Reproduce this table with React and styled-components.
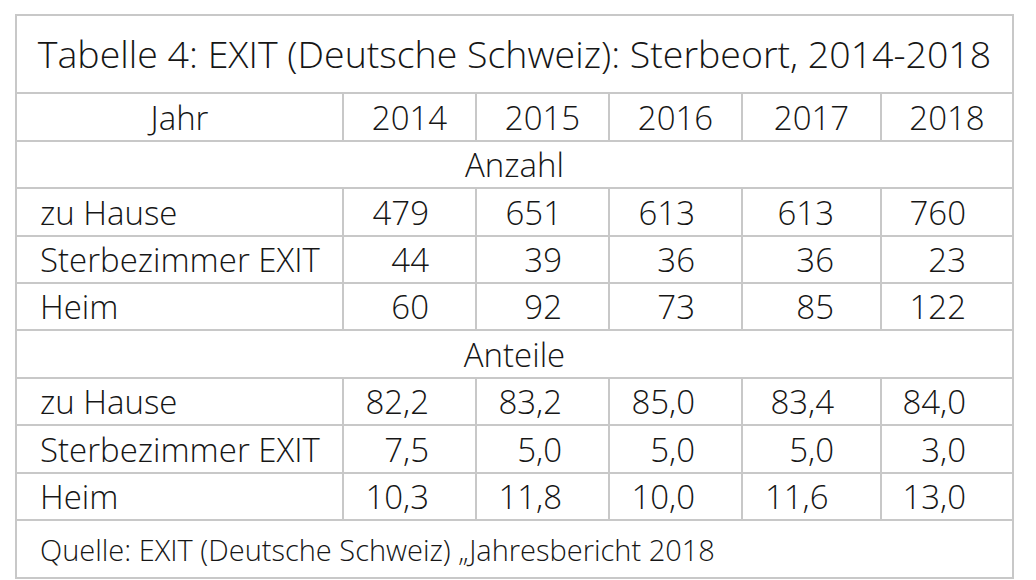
import React from 'react';
import styled, { createGlobalStyle } from 'styled-components';

const GlobalStyle = createGlobalStyle`
  html, body {
    margin: 0;
    padding: 0;
    background: #ffffff;
  }
  body {
    font-family: "Open Sans", "Liberation Sans", sans-serif;
    font-weight: 300;
    color: #161616;
  }
`;

const Page = styled.div`
  padding: 14px 0 0 15px;
`;

const Grid = styled.div`
  display: inline-grid;
  grid-template-columns: 325px 131px 131px 131px 137px 130px;
  grid-template-rows: 76px 46px 45px 46px 45px 45px 46px 45px 46px 45px 56px;
  gap: 2px;
  padding: 2px;
  background: #c8c8c8;
`;

const Cell = styled.div`
  background: #ffffff;
  display: flex;
  align-items: center;
  font-size: 33px;
  line-height: 1;
  white-space: pre;
  justify-content: ${(p) =>
    p.$align === 'right' ? 'flex-end' : p.$align === 'left' ? 'flex-start' : 'center'};
  padding: ${(p) =>
    p.$align === 'right' ? '0 46px 0 0' : p.$align === 'left' ? '0 0 0 23px' : '0'};
`;

const Title = styled(Cell)`
  grid-column: 1 / -1;
  font-size: 37.5px;
`;

const Section = styled(Cell)`
  grid-column: 1 / -1;
`;

const Source = styled(Cell)`
  grid-column: 1 / -1;
  font-size: 29px;
`;

const years = ['2014', '2015', '2016', '2017', '2018'];

const anzahl = [
  ['zu Hause', '479', '651', '613', '613', '760'],
  ['Sterbezimmer EXIT', '44', '39', '36', '36', '23'],
  ['Heim', '60', '92', '73', '85', '122'],
];

// the source table has a stray trailing space after 11,6
const anteile = [
  ['zu Hause', '82,2', '83,2', '85,0', '83,4', '84,0'],
  ['Sterbezimmer EXIT', '7,5', '5,0', '5,0', '5,0', '3,0'],
  ['Heim', '10,3', '11,8', '10,0', '11,6\u2009', '13,0'],
];

const DataRows = ({ rows }) =>
  rows.map(([label, ...values]) => (
    <React.Fragment key={label}>
      <Cell $align="left">{label}</Cell>
      {values.map((v, i) => (
        <Cell key={i} $align="right">
          {v}
        </Cell>
      ))}
    </React.Fragment>
  ));

export default function App() {
  return (
    <Page>
      <GlobalStyle />
      <Grid>
        <Title>Tabelle 4: EXIT (Deutsche Schweiz): Sterbeort, 2014-2018</Title>
        <Cell>Jahr</Cell>
        {years.map((y) => (
          <Cell key={y}>{y}</Cell>
        ))}
        <Section>Anzahl</Section>
        <DataRows rows={anzahl} />
        <Section>Anteile</Section>
        <DataRows rows={anteile} />
        <Source $align="left">Quelle: EXIT (Deutsche Schweiz) „Jahresbericht 2018</Source>
      </Grid>
    </Page>
  );
}
